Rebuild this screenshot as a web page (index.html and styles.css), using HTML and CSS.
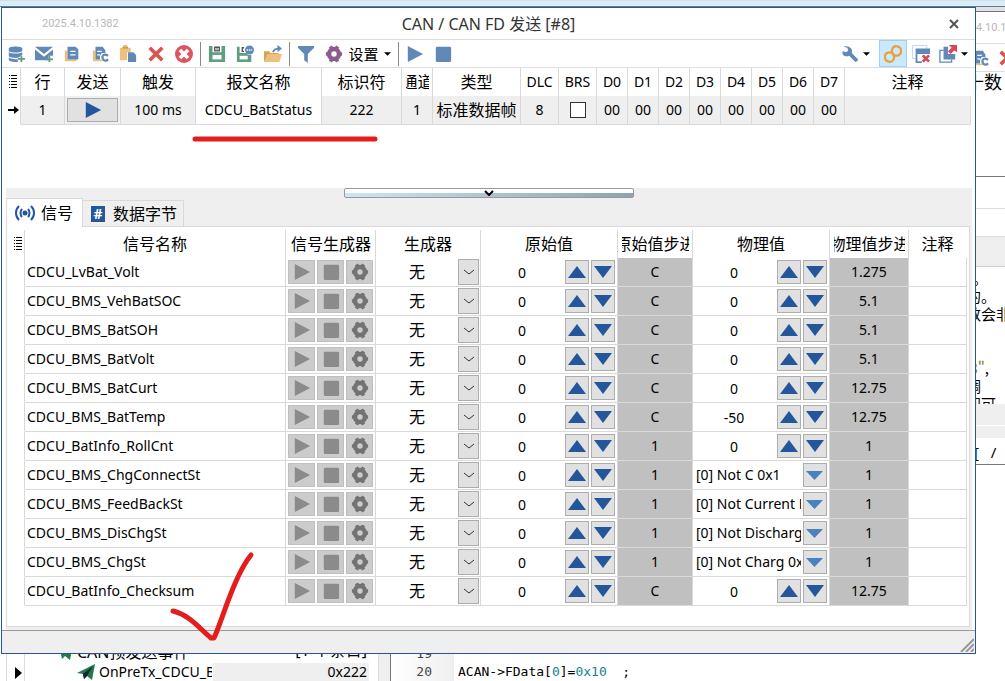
FILE: index.html
```html
<!DOCTYPE html>
<html lang="zh-CN">
<head>
    <meta charset="UTF-8">
    <meta name="viewport" content="width=device-width, initial-scale=1.0">
    <title>CAN / CAN FD 发送 [#8]</title>
    <link rel="stylesheet" href="styles.css">
</head>
<body>
    <!-- 图标 -->
    <svg class="sprite" aria-hidden="true">
        <symbol id="i-db" viewBox="0 0 20 20">
            <path fill="#6189b8" d="M2 4c0-3 15-3 15 0v2c0 3-15 3-15 0zM2 8c3 2 12 2 15 0v3c-2 1-3 2-4 3-5 1-11 0-11-2zM2 14c3 2 7 2 10 2v3c-5 0-10-1-10-3z"/>
            <path stroke="#5f9f7e" stroke-width="2" d="M12 15.500h8M16 12v7"/>
        </symbol>
        <symbol id="i-mail" viewBox="0 0 20 20">
            <path fill="#6189b8" d="M0 2h20l-10 8zM0 5l10 8 10-8v7h-5v5H0z"/>
            <path stroke="#5f9f7e" stroke-width="2" d="M12 16h8M16 12v7"/>
        </symbol>
        <symbol id="i-copy" viewBox="0 0 20 20">
            <path fill="#eec07a" d="M2 6h3v10h10v2H2z"/>
            <path fill="#6189b8" d="M5 2h9l3 3v11H5z"/>
            <path stroke="#fff" stroke-width="1.500" d="M8 7h6M8 11h6"/>
        </symbol>
        <symbol id="i-copyc" viewBox="0 0 20 20">
            <path fill="#eec07a" d="M2 6h3v10h8v2H2z"/>
            <path fill="#6189b8" d="M5 2h8l3 4v3h-4l-2 3v4H5z"/>
            <path stroke="#fff" stroke-width="1.500" d="M7 7h5M7 11h3"/>
            <path fill="none" stroke="#6189b8" stroke-width="2.500" d="M19 12c-5-3-7 0-6 3 1 3 4 3 6 1"/>
        </symbol>
        <symbol id="i-paste" viewBox="0 0 20 20">
            <path fill="#eec07a" d="M1 3h3l1-3h4l1 3h3v5H9v9H1z"/>
            <path fill="#c79b5b" d="M4 2h6v2H4z"/>
            <path fill="#6189b8" d="M10 8h6l3 3v8h-9z"/>
        </symbol>
        <symbol id="i-x" viewBox="0 0 20 20">
            <path stroke="#d9534f" stroke-width="4" d="M3 3l14 14M17 3L3 17"/>
        </symbol>
        <symbol id="i-xc" viewBox="0 0 20 20">
            <circle cx="10" cy="10" r="10" fill="#dc5560"/>
            <path stroke="#fff" stroke-width="4" d="M5.500 5.500l9 9M14.500 5.500l-9 9"/>
        </symbol>
        <symbol id="i-save" viewBox="0 0 20 20">
            <path fill="#5f9f7e" d="M1 1h4v7h10V1h4v18H1z"/>
            <path fill="#fff" d="M5 11h10v5H5z"/>
            <path fill="none" stroke="#555" stroke-width="1.500" d="M7.500 2.500h5v4h-5z"/>
            <path stroke="#555" d="M10 3v3"/>
        </symbol>
        <symbol id="i-saveas" viewBox="0 0 20 20">
            <path fill="#5f9f7e" d="M1 2h3v7h7l3 2h3v8H1z"/>
            <path fill="#fff" d="M4 12h9v4H4z"/>
            <path fill="none" stroke="#555" stroke-width="1.500" d="M9 3H7v4h2"/>
            <circle cx="15" cy="5.500" r="5" fill="#6189b8"/>
            <path stroke="#fff" stroke-width="1.500" stroke-dasharray="1.500 1" d="M12 5.500h6"/>
        </symbol>
        <symbol id="i-open" viewBox="0 0 20 20">
            <path fill="#d3a45b" d="M0 7h6l1 2h9v9H0z"/>
            <path fill="#eec07a" d="M4 10h16l-3 9H0z"/>
            <path fill="none" stroke="#6189b8" stroke-width="2" d="M10 8c1-3 3-4 6-4"/>
            <path fill="#6189b8" d="M15 0l5 4-5 4z"/>
        </symbol>
        <symbol id="i-filter" viewBox="0 0 20 20">
            <path fill="#6189b8" d="M1 1h18v2l-7 7v10l-4-3v-7L1 3z"/>
        </symbol>
        <symbol id="i-gear" viewBox="0 0 20 20">
            <circle cx="10" cy="10" r="5.500" fill="none" stroke="currentColor" stroke-width="5"/>
            <path stroke="currentColor" stroke-width="4" d="M6 1.500L8 5M14 1.500L12 5M6 18.500L8 15M14 18.500L12 15M1 10h4M15 10h4"/>
        </symbol>
        <symbol id="i-play" viewBox="0 0 20 20"><path fill="currentColor" d="M2 1l17 9-17 9z"/></symbol>
        <symbol id="i-stop" viewBox="0 0 20 20"><rect x="2" y="2" width="17" height="17" rx="1.500" fill="currentColor"/></symbol>
        <symbol id="i-wrench" viewBox="0 0 20 20">
            <path fill="#6189b8" d="M3 2l4 1 1 3-2 2-4-1c-2 4 3 7 7 5l7 7 2-1 1-2-7-7c2-5-4-9-9-7z"/>
        </symbol>
        <symbol id="i-link" viewBox="0 0 20 20">
            <path fill="none" stroke="#e8a23a" stroke-width="2.500" stroke-linecap="round" d="M9 9c-4-2-8 0-8 4 0 6 8 8 10 2 1-3 0-4-2-6M11 11c4 2 8 0 8-4 0-6-8-8-10-2-1 3 0 4 2 6"/>
        </symbol>
        <symbol id="i-winx" viewBox="0 0 20 20">
            <path fill="none" stroke="#b9d2ec" d="M5 15H.5V.5h16V4"/>
            <path fill="#6189b8" d="M4 4h16v6H6v8h5v2H4z"/>
            <path stroke="#d9455a" stroke-width="3" d="M12 11.500l7 7M19 11.500l-7 7"/>
        </symbol>
        <symbol id="i-pop" viewBox="0 0 20 20">
            <path fill="none" stroke="#6189b8" stroke-width="1.500" d="M5 6H1v13h13v-3"/>
            <path fill="#6189b8" d="M5 2h5v8h8v6H5z"/>
            <path fill="#d9455a" d="M11 0h9v8l-3-2-4 4-3-3 4-4z"/>
        </symbol>
        <symbol id="i-caret" viewBox="0 0 8 4"><path d="M0 0h8L4 4z"/></symbol>
        <symbol id="i-up" viewBox="0 0 20 20"><path fill="#23569a" d="M10 4l9 12H1z"/></symbol>
        <symbol id="i-down" viewBox="0 0 20 20"><path fill="#23569a" d="M1 4h18l-9 12z"/></symbol>
        <symbol id="i-drop" viewBox="0 0 20 20"><path fill="#4a82bd" d="M1 6h17l-8.500 9z"/></symbol>
        <symbol id="i-chev" viewBox="0 0 20 20"><path fill="none" stroke="#333" d="M5 8l5 4 5-4"/></symbol>
        <symbol id="i-list" viewBox="0 0 8 14">
            <path stroke="#000" d="M0 .5h1M2 .5h6M2 3.500h6M0 3.500h1M0 6.500h1M2 6.500h6M0 9.500h1M2 9.500h6M0 12.500h1M2 12.500h6"/>
        </symbol>
    </svg>

    <div class="top-edge"></div>

    <main class="dialog">
        <header class="titlebar">
            <span class="version">2025.4.10.1382</span>
            <h1>CAN / CAN FD 发送 [#8]</h1>
            <button class="close" aria-label="关闭"><svg viewBox="0 0 10 10"><path stroke="#555" stroke-width="2" d="M1 1l8 8M9 1L1 9"/></svg></button>
        </header>

        <div class="toolbar">
            <button class="tool" aria-label="数据库"><svg><use href="#i-db"/></svg></button>
            <button class="tool" aria-label="新建报文"><svg><use href="#i-mail"/></svg></button>
            <button class="tool" aria-label="复制"><svg><use href="#i-copy"/></svg></button>
            <button class="tool" aria-label="复制为 C"><svg><use href="#i-copyc"/></svg></button>
            <button class="tool" aria-label="粘贴"><svg><use href="#i-paste"/></svg></button>
            <button class="tool" aria-label="删除"><svg><use href="#i-x"/></svg></button>
            <button class="tool" aria-label="全部删除"><svg><use href="#i-xc"/></svg></button>
            <i class="sep"></i>
            <button class="tool" aria-label="保存"><svg><use href="#i-save"/></svg></button>
            <button class="tool" aria-label="另存为"><svg><use href="#i-saveas"/></svg></button>
            <button class="tool" aria-label="打开"><svg><use href="#i-open"/></svg></button>
            <i class="sep"></i>
            <button class="tool" aria-label="过滤"><svg><use href="#i-filter"/></svg></button>
            <button class="tool settings"><svg class="purple"><use href="#i-gear"/></svg><span>设置</span><svg class="caret"><use href="#i-caret"/></svg></button>
            <i class="sep"></i>
            <button class="tool" aria-label="启动"><svg><use href="#i-play"/></svg></button>
            <button class="tool" aria-label="停止"><svg><use href="#i-stop"/></svg></button>
            <span class="spacer"></span>
            <button class="tool wide" aria-label="工具"><svg><use href="#i-wrench"/></svg><svg class="caret"><use href="#i-caret"/></svg></button>
            <button class="tool active" aria-label="链接"><svg><use href="#i-link"/></svg></button>
            <button class="tool" aria-label="关闭窗口"><svg><use href="#i-winx"/></svg></button>
            <button class="tool wide" aria-label="弹出"><svg><use href="#i-pop"/></svg><svg class="caret"><use href="#i-caret"/></svg></button>
        </div>

        <section class="messages">
            <table class="msg-table">
                <colgroup>
                    <col class="w19"><col class="w44"><col class="w56"><col class="w75"><col class="w126"><col class="w80"><col class="w31"><col class="w88"><col class="w38"><col class="w38">
                    <col class="w31"><col class="w31"><col class="w31"><col class="w31"><col class="w31"><col class="w31"><col class="w31"><col class="w31"><col>
                </colgroup>
                <thead>
                    <tr>
                        <th><svg class="list"><use href="#i-list"/></svg></th>
                        <th>行</th><th>发送</th><th>触发</th><th>报文名称</th><th>标识符</th>
                        <th><span class="clip">通道</span></th><th>类型</th>
                        <th class="en">DLC</th><th class="en">BRS</th>
                        <th class="en">D0</th><th class="en">D1</th><th class="en">D2</th><th class="en">D3</th>
                        <th class="en">D4</th><th class="en">D5</th><th class="en">D6</th><th class="en">D7</th>
                        <th>注释</th>
                    </tr>
                </thead>
                <tbody>
                    <tr>
                        <td class="marker"><svg viewBox="0 0 12 10"><path d="M0 4h6V1l5 4-5 4V6H0z"/></svg></td>
                        <td>1</td>
                        <td class="send"><button aria-label="发送"><svg><use href="#i-play"/></svg></button></td>
                        <td>100 ms</td><td class="focus">CDCU_BatStatus</td><td>222</td><td>1</td>
                        <td class="cjk">标准数据帧</td><td>8</td>
                        <td><input type="checkbox" aria-label="BRS"></td>
                        <td>00</td><td>00</td><td>00</td><td>00</td><td>00</td><td>00</td><td>00</td><td>00</td><td></td>
                    </tr>
                </tbody>
            </table>
        </section>

        <section class="signals">
            <div class="split"><svg viewBox="0 0 10 6"><path fill="none" stroke="#000" stroke-width="2" d="M1 1l4 4 4-4"/></svg></div>
            <div class="tabs" role="tablist">
                <button class="tab on" role="tab" aria-selected="true">
                    <svg viewBox="0 0 20 16"><g fill="none" stroke="#23569a" stroke-width="2"><path d="M4 1c-4 4-4 10 0 14M7 4c-2 2-2 6 0 8M16 1c4 4 4 10 0 14M13 4c2 2 2 6 0 8"/></g><circle cx="10" cy="8" r="2.500" fill="#23569a"/></svg>
                    信号
                </button>
                <button class="tab" role="tab" aria-selected="false"><span class="hash">#</span>数据字节</button>
            </div>
            <div class="panel">
                <table class="sig-table">
                    <colgroup>
                        <col class="w18"><col><col class="w90"><col class="w105"><col class="w137"><col class="w75"><col class="w137"><col class="w79"><col class="w58">
                    </colgroup>
                    <thead>
                        <tr>
                            <th><svg class="list"><use href="#i-list"/></svg></th>
                            <th>信号名称</th><th><span class="clip">信号生成器</span></th><th>生成器</th><th>原始值</th>
                            <th><span class="clip">原始值步进</span></th><th>物理值</th><th><span class="clip">物理值步进</span></th><th>注释</th>
                        </tr>
                    </thead>
                    <tbody id="signalRows"></tbody>
                </table>
            </div>
        </section>

        <footer class="statusbar">
            <svg class="grip" viewBox="0 0 14 14"><path stroke="#999" stroke-width="2" d="M1 14L14 1M6 14l8-8M11 14l3-3"/></svg>
        </footer>

        <svg class="mark underline" viewBox="0 0 186 8"><path d="M3 4h180"/></svg>
        <svg class="mark tick" viewBox="0 0 88 92"><path d="M4 60c17 4 28 19 38 27h3C53 70 65 25 82 4"/></svg>
    </main>

    <!-- 右侧被遮挡的窗口 -->
    <aside class="behind-right">
        <div class="r-title">4.10.1382</div>
        <div class="r-tools"><svg><use href="#i-copyc"/></svg><svg><use href="#i-x"/></svg></div>
        <div class="r-note">十数</div>
        <div class="r-row"></div>
        <div class="r-row light"></div>
        <div class="r-gray"></div>
        <pre class="r-code">  。
的。
数会非


 <b>3"</b>,
调
即可</pre>
        <div class="r-bar"></div>
        <div class="r-foot">[   /</div>
    </aside>

    <!-- 底部被遮挡的窗口 -->
    <div class="behind-bottom">
        <div class="tree-mark"><svg viewBox="0 0 8 12"><path d="M1 0l7 6-7 6z"/></svg></div>
        <div class="tree">
            <div class="tree-row"><span class="tree-name head"><svg viewBox="0 0 18 16"><path fill="#217a4b" d="M0 9L18 0l-3 16-5-4-3 3-1-5z"/></svg>CAN预发送事件</span><span class="tree-id">[1 个条目]</span></div>
            <div class="tree-row"><span class="tree-name"><svg viewBox="0 0 18 16"><path fill="#217a4b" d="M0 9L18 0l-3 16-5-4-3 3-1-5z"/><path fill="#123" d="M6 10l10-8-6 10-3 3z"/></svg>OnPreTx_CDCU_BatStatus</span><span class="tree-id gray">0x222</span></div>
        </div>
        <div class="gap"></div>
        <div class="gutter"><span>19</span><span>20</span></div>
        <pre class="code">ACAN-&gt;FData[<em>0</em>]=<em>0x10</em>  ;</pre>
    </div>

    <script src="signals.js"></script>
</body>
</html>
```
FILE: styles.css
```css
* {
    box-sizing: border-box;
}

body {
    margin: 0;
    min-height: 100vh;
    display: grid;
    grid-template-columns: minmax(0, 1fr) 29px;
    grid-template-rows: 7px 1fr 27px;
    background: #fff;
    color: #000;
    font: 14px/20px "Noto Sans", "Noto Sans CJK SC", sans-serif;
    overflow: hidden;
}

button,
input,
select {
    font: inherit;
    color: inherit;
}

button {
    padding: 0;
    border: none;
    background: none;
    display: flex;
    align-items: center;
    justify-content: center;
}

svg {
    display: block;
    flex: none;
}

.sprite {
    position: absolute;
    width: 0;
    height: 0;
}

.top-edge {
    grid-column: 1 / -1;
    background: #d9eefc;
    border-top: 1px solid #ddd;
    border-bottom: 1px solid #777;
}

/* 发送窗口 */
.dialog {
    position: relative;
    display: flex;
    flex-direction: column;
    margin-left: 1px;
    border: 1px solid #23569a;
    background: #fff;
}

.titlebar {
    display: grid;
    grid-template-columns: 1fr auto 1fr;
    align-items: center;
    height: 32px;
    border-bottom: 1px solid #ddd;
}

.titlebar h1 {
    margin: 0;
    font-size: 16px;
    font-weight: normal;
    color: #333;
}

.version {
    padding-left: 40px;
    font: 11px/20px Roboto, sans-serif;
    color: #b8b8b8;
}

.close {
    justify-self: end;
    width: 42px;
    height: 31px;
}

.close svg {
    width: 10px;
    height: 10px;
}

.toolbar {
    display: flex;
    align-items: center;
    height: 28px;
    padding-right: 2px;
    border-bottom: 1px solid #ddd;
    color: #6189b8;
}

.tool {
    width: 28px;
    height: 27px;
}

.tool svg {
    width: 18px;
    height: 18px;
}

.tool .caret {
    width: 7px;
    height: 4px;
}

.tool.wide {
    width: 38px;
    gap: 4px;
    padding-right: 2px;
}

.tool.settings {
    width: 76px;
    gap: 5px;
    font-size: 15px;
    color: #000;
}

.tool .purple {
    color: #8b5c8d;
}

.tool.active {
    margin-left: 4px;
    background: #cce8ff;
    border: 1px solid #99d1ff;
}

.spacer {
    flex: 1;
}

.sep {
    width: 1px;
    height: 24px;
    margin: 0 2px;
    background: #888;
}

table {
    width: 100%;
    table-layout: fixed;
    border-collapse: separate;
    border-spacing: 0;
}

th,
td {
    padding: 0;
    text-align: center;
    white-space: nowrap;
    overflow: hidden;
    border-right: 1px solid #d9d9d9;
}

th {
    height: 28px;
    font-size: 16px;
    font-weight: normal;
}

th.en {
    font-size: 14px;
}

.cjk {
    font-size: 16px;
}

.clip {
    display: flex;
    justify-content: center;
    margin: 0 3px 0 4px;
    overflow: hidden;
}

.list {
    width: 8px;
    height: 14px;
    margin-left: 7px;
}

.w18 { width: 18px; }
.w19 { width: 19px; }
.w31 { width: 31px; }
.w38 { width: 38px; }
.w44 { width: 44px; }
.w56 { width: 56px; }
.w58 { width: 58px; }
.w75 { width: 75px; }
.w79 { width: 79px; }
.w80 { width: 80px; }
.w88 { width: 88px; }
.w90 { width: 90px; }
.w105 { width: 105px; }
.w126 { width: 126px; }
.w137 { width: 137px; }

.messages {
    height: 120px;
    padding-right: 4px;
}

.msg-table th:last-child {
    border-right-color: transparent;
}

.msg-table td {
    height: 29px;
    background: #efefef;
    border-bottom: 1px solid #d9d9d9;
}

.msg-table td.marker {
    background: #fff;
    border-bottom-color: transparent;
}

.msg-table td.focus {
    background: #fff;
}

.marker svg {
    width: 12px;
    height: 10px;
    margin-left: 6px;
}

.send button {
    width: 51px;
    height: 24px;
    margin: 0 auto;
    background: #e1e1e1;
    border: 1px solid #adadad;
    color: #23569a;
}

.send svg {
    width: 18px;
    height: 18px;
}

input[type="checkbox"] {
    appearance: none;
    display: block;
    width: 16px;
    height: 16px;
    margin: 0 auto;
    background: #fff;
    border: 1px solid #333;
}

/* 信号区 */
.signals {
    flex: 1;
    display: flex;
    flex-direction: column;
    margin: 0 3px 0 4px;
    padding-bottom: 3px;
    background: #efefef;
}

.split {
    display: flex;
    align-items: center;
    justify-content: center;
    width: 290px;
    height: 10px;
    margin: 0 auto;
    border: 1px solid #999;
    border-radius: 2px;
    background: linear-gradient(#fff 45%, transparent 45%), linear-gradient(90deg, #cde6f7, #8aa4b4);
}

.split svg {
    width: 10px;
    height: 6px;
}

.tabs {
    display: flex;
    align-items: flex-end;
    height: 28px;
}

.tab {
    gap: 6px;
    height: 26px;
    padding: 0 6px 0 8px;
    border: 1px solid #d9d9d9;
    border-width: 1px 1px 0 0;
    font-size: 16px;
}

.tab.on {
    height: 29px;
    padding-right: 9px;
    border-left-width: 1px;
    background: #fff;
    margin-bottom: -1px;
    z-index: 1;
}

.tab svg {
    width: 20px;
    height: 16px;
}

.hash {
    width: 14px;
    height: 16px;
    margin-right: 2px;
    background: #23569a;
    color: #fff;
    font-size: 14px;
    font-weight: bold;
    line-height: 16px;
}

.panel {
    flex: 1;
    margin-right: 2px;
    padding: 3px 2px 0 0;
    border: 1px solid #d9d9d9;
    background: #fff;
}

.sig-table th:last-child {
    border-right-color: transparent;
}

.sig-table td {
    height: 29px;
    border-bottom: 1px solid #d9d9d9;
}

.sig-table td:first-child {
    border-bottom-color: transparent;
}

.sig-table td.name {
    padding-left: 2px;
    text-align: left;
}

.sig-table td.step {
    background: #c0c0c0;
}

.gen {
    display: flex;
    gap: 2px;
    padding-left: 2px;
}

.gen button {
    width: 27px;
    height: 24px;
    background: #ccc;
    border: 1px solid #bfbfbf;
    color: #8b8b8b;
}

.gen svg {
    width: 18px;
    height: 18px;
}

.gen .dark {
    color: #737373;
}

.combo {
    display: grid;
    grid-template-columns: 1fr 21px;
    align-items: center;
    padding-right: 1px;
}

.combo select {
    grid-area: 1 / 1 / 2 / 3;
    width: 100%;
    height: 26px;
    padding: 0 21px 0 0;
    appearance: none;
    border: none;
    background: none;
    font-size: 16px;
    text-align: center;
    text-align-last: center;
}

.combo .face {
    grid-area: 1 / 2;
    display: flex;
    align-items: center;
    justify-content: center;
    height: 26px;
    background: #e1e1e1;
    border: 1px solid #adadad;
    pointer-events: none;
}

.face svg {
    width: 20px;
    height: 20px;
}

.combo.phys {
    grid-template-columns: 1fr 24px;
    padding-right: 2px;
}

.combo.phys select {
    padding: 0 26px 0 3px;
    font-size: 14px;
    text-align: left;
    text-align-last: left;
}

.combo.phys .face {
    height: 24px;
}

.spin {
    display: flex;
    align-items: center;
    gap: 2px;
    padding-right: 2px;
}

.spin input {
    flex: 1;
    min-width: 0;
    height: 24px;
    padding: 0;
    border: none;
    background: none;
    text-align: center;
}

.spin button {
    width: 24px;
    height: 24px;
    background: #e1e1e1;
    border: 1px solid #adadad;
}

.spin svg {
    width: 20px;
    height: 20px;
}

.statusbar {
    display: flex;
    align-items: flex-end;
    justify-content: flex-end;
    height: 23px;
    padding: 1px;
    border-top: 1px solid #999;
    background: #efefef;
}

.grip {
    width: 14px;
    height: 14px;
}

/* 手绘标注 */
.mark {
    position: absolute;
    fill: none;
    stroke: #e51c1c;
    stroke-width: 5px;
    stroke-linecap: round;
    stroke-linejoin: round;
    pointer-events: none;
}

.underline {
    top: 127px;
    left: 190px;
    width: 186px;
    height: 8px;
}

.tick {
    bottom: 10px;
    left: 167px;
    width: 88px;
    height: 92px;
}

/* 后面的窗口 */
.behind-right {
    overflow: hidden;
    border-top: 4px solid #dde3ea;
    white-space: nowrap;
}

.r-title {
    height: 33px;
    border-top: 1px solid #777;
    border-bottom: 1px solid #ddd;
    font: 11px/32px Roboto, sans-serif;
    color: #b8b8b8;
}

.r-tools {
    display: flex;
    align-items: center;
    gap: 9px;
    height: 28px;
    margin-left: -5px;
    border-bottom: 1px solid #ddd;
}

.r-tools svg {
    width: 18px;
    height: 18px;
}

.r-note {
    height: 105px;
    margin-left: -10px;
    font-size: 18px;
    border-bottom: 1px solid #777;
}

.r-row {
    height: 32px;
    border-bottom: 1px solid #ddd;
}

.r-row.light {
    height: 28px;
}

.r-gray {
    height: 30px;
    background: #efefef;
    border-bottom: 1px solid #ccc;
}

.r-code {
    height: 137px;
    margin: 0 0 0 -10px;
    padding-top: 2px;
    overflow: hidden;
    font: 15px/18px "Noto Sans CJK SC", sans-serif;
}

.r-code b {
    font-weight: normal;
    color: #80801a;
}

.r-bar {
    height: 34px;
    border-bottom: 12px solid #efefef;
    background: linear-gradient(#efefef 20px, #ddd 20px, #fff 21px);
}

.r-foot {
    height: 27px;
    margin-left: -4px;
    padding-left: 2px;
    border-bottom: 1px solid #777;
    font: 15px/28px "Noto Sans", sans-serif;
    white-space: pre;
}

.behind-bottom {
    grid-column: 1 / -1;
    display: flex;
    height: 27px;
    padding-left: 6px;
    overflow: hidden;
}

.tree-mark {
    width: 19px;
    padding: 13px 0 0 7px;
    border: 1px solid #ddd;
    border-width: 0 1px;
}

.tree-mark svg {
    width: 8px;
    height: 12px;
}

.tree {
    display: flex;
    flex-direction: column;
    justify-content: flex-end;
    width: 344px;
}

.tree-row {
    display: flex;
    flex: none;
    height: 18px;
    line-height: 18px;
}

.tree-row:first-child {
    height: 22px;
    font-size: 16px;
}

.tree-name {
    display: flex;
    align-items: center;
    gap: 4px;
    width: 187px;
    padding-left: 52px;
    overflow: hidden;
    white-space: nowrap;
}

.tree-name.head {
    padding-left: 30px;
}

.tree-name svg {
    width: 18px;
    height: 16px;
}

.tree-id {
    flex: 1;
    margin-left: 1px;
    padding-right: 2px;
    text-align: right;
}

.tree-id.gray {
    background: #efefef;
}

.gap {
    width: 13px;
    margin-left: 9px;
    background: #efefef;
    border: 1px solid #ddd;
    border-right-color: #777;
    border-width: 0 1px;
}

.gutter {
    display: flex;
    flex-direction: column;
    justify-content: flex-end;
    width: 63px;
    padding-right: 22px;
    background: linear-gradient(90deg, #fff, #efefef);
    text-align: right;
    font: 13px/18px "DejaVu Sans Mono", monospace;
    color: #444;
}

.code {
    align-self: flex-end;
    margin: 0 0 0 4px;
    font: 13px/18px "DejaVu Sans Mono", monospace;
}

.code em {
    font-style: normal;
    color: #0e8585;
}
```
FILE: signals.js
```js
// 信号列表: 名称, 原始值步进, 物理值, 物理值步进
const signals = [
    ['CDCU_LvBat_Volt', 'C', '0', '1.275'],
    ['CDCU_BMS_VehBatSOC', 'C', '0', '5.1'],
    ['CDCU_BMS_BatSOH', 'C', '0', '5.1'],
    ['CDCU_BMS_BatVolt', 'C', '0', '5.1'],
    ['CDCU_BMS_BatCurt', 'C', '0', '12.75'],
    ['CDCU_BMS_BatTemp', 'C', '-50', '12.75'],
    ['CDCU_BatInfo_RollCnt', '1', '0', '1'],
    ['CDCU_BMS_ChgConnectSt', '1', '[0] Not C 0x1', '1'],
    ['CDCU_BMS_FeedBackSt', '1', '[0] Not Current F', '1'],
    ['CDCU_BMS_DisChgSt', '1', '[0] Not Discharg', '1'],
    ['CDCU_BMS_ChgSt', '1', '[0] Not Charg 0x', '1'],
    ['CDCU_BatInfo_Checksum', 'C', '0', '12.75']
];

const icon = (id) => `<svg><use href="#i-${id}"/></svg>`;

function spin(value, label) {
    return `<div class="spin"><input type="text" value="${value}" aria-label="${label}">
        <button aria-label="增加">${icon('up')}</button><button aria-label="减少">${icon('down')}</button></div>`;
}

function combo(value, label, cls, arrow) {
    return `<div class="combo ${cls}"><select aria-label="${label}"><option>${value}</option></select>
        <span class="face">${icon(arrow)}</span></div>`;
}

document.getElementById('signalRows').innerHTML = signals.map(([name, rawStep, phys, physStep]) => `
    <tr>
        <td></td>
        <td class="name">${name}</td>
        <td><div class="gen">
            <button aria-label="启动">${icon('play')}</button><button aria-label="停止">${icon('stop')}</button><button class="dark" aria-label="设置">${icon('gear')}</button>
        </div></td>
        <td>${combo('无', name + ' 生成器', '', 'chev')}</td>
        <td>${spin('0', name + ' 原始值')}</td>
        <td class="step">${rawStep}</td>
        <td>${phys.startsWith('[') ? combo(phys, name + ' 物理值', 'phys', 'drop') : spin(phys, name + ' 物理值')}</td>
        <td class="step">${physStep}</td>
        <td></td>
    </tr>`).join('');
```
